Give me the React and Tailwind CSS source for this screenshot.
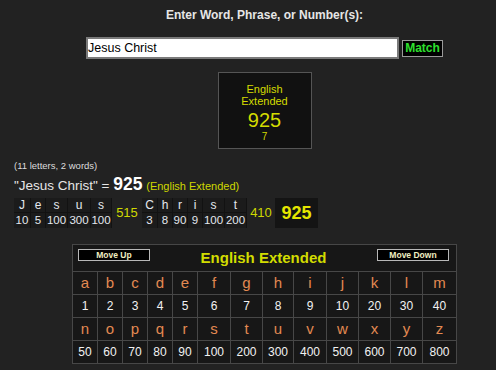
const topLetters = ['a', 'b', 'c', 'd', 'e', 'f', 'g', 'h', 'i', 'j', 'k', 'l', 'm'];
const topValues = [1, 2, 3, 4, 5, 6, 7, 8, 9, 10, 20, 30, 40];
const bottomLetters = ['n', 'o', 'p', 'q', 'r', 's', 't', 'u', 'v', 'w', 'x', 'y', 'z'];
const bottomValues = [50, 60, 70, 80, 90, 100, 200, 300, 400, 500, 600, 700, 800];

const words = [
  {
    sum: 515,
    sumWidth: 'w-[30px]',
    chars: [
      { ch: 'J', val: 10, w: 'w-[17px]' },
      { ch: 'e', val: 5, w: 'w-[15px]' },
      { ch: 's', val: 100, w: 'w-[22px]' },
      { ch: 'u', val: 300, w: 'w-[23px]' },
      { ch: 's', val: 100, w: 'w-[21px]' },
    ],
  },
  {
    sum: 410,
    sumWidth: 'w-[28px]',
    chars: [
      { ch: 'C', val: 3, w: 'w-[16px]' },
      { ch: 'h', val: 8, w: 'w-[15px]' },
      { ch: 'r', val: 90, w: 'w-[15px]' },
      { ch: 'i', val: 9, w: 'w-[15px]' },
      { ch: 's', val: 100, w: 'w-[22px]' },
      { ch: 't', val: 200, w: 'w-[22px]' },
    ],
  },
];

function Breakdown() {
  return (
    <div className="flex h-[30px] self-start ml-[14px] mt-[4px]">
      {words.map((word, wi) => (
        <div key={wi} className="flex">
          {word.chars.map((c, i) => (
            <div key={i} className={`${c.w} flex flex-col border-r border-[#121212]`}>
              <div className="h-[15px] flex items-center justify-center bg-[#1b1b1b] border-b border-[#121212] text-[12px] text-[#e4e8ee]">
                {c.ch}
              </div>
              <div className="h-[15px] flex items-center justify-center bg-[#1b1b1b] text-[11.5px] text-[#e4e8ee]">
                {c.val}
              </div>
            </div>
          ))}
          <div className={`${word.sumWidth} flex items-center justify-center text-[13px] text-[#cfd800]`}>
            {word.sum}
          </div>
        </div>
      ))}
      <div className="w-[43px] flex items-center justify-center bg-[#141414] text-[18px] font-bold text-[#e6e600]">
        925
      </div>
    </div>
  );
}

function CipherTable() {
  const cols = 'grid grid-cols-[24px_24px_24px_24px_24px_32px_31px_30px_32px_31px_31px_31px_33px]';
  return (
    <div className={`${cols} gap-px bg-[#474747] border border-[#474747] mt-[16px]`}>
      <div className="col-span-full h-[26px] bg-[#171717] flex items-start justify-between pl-[5px] pr-[7px] pt-[4px]">
        <button className="w-[72px] h-[12px] bg-black border border-[#b8b8b8] text-[8.5px] font-bold leading-none text-[#f0eec0]">
          Move Up
        </button>
        <span className="text-[15px] font-bold leading-[18px] text-[#d2dc00]">English Extended</span>
        <button className="w-[72px] h-[12px] bg-black border border-[#b8b8b8] text-[8.5px] font-bold leading-none text-[#f0eec0]">
          Move Down
        </button>
      </div>
      {topLetters.map((l) => (
        <div key={l} className="h-[22px] bg-[#171717] flex items-center justify-center text-[15px] text-[#e38a52]">
          {l}
        </div>
      ))}
      {topValues.map((v) => (
        <div key={v} className="h-[22px] bg-[#171717] flex items-center justify-center text-[12px] text-[#f2f2f2]">
          {v}
        </div>
      ))}
      {bottomLetters.map((l) => (
        <div key={l} className="h-[22px] bg-[#171717] flex items-center justify-center text-[15px] text-[#e38a52]">
          {l}
        </div>
      ))}
      {bottomValues.map((v) => (
        <div key={v} className="h-[22px] bg-[#171717] flex items-center justify-center text-[12px] text-[#f2f2f2]">
          {v}
        </div>
      ))}
    </div>
  );
}

export default function App() {
  return (
    <div className="w-full h-[370px] overflow-hidden bg-[#222222] font-['Liberation_Sans',Arial,sans-serif]">
      <div className="w-[529px] flex flex-col items-center pt-[7px]">
        <div className="text-[12px] leading-[16px] font-bold text-[#e6e6e6]">
          Enter Word, Phrase, or Number(s):
        </div>

        <div className="flex items-center gap-[3px] mt-[14px]">
          <div className="w-[313px] h-[22px] bg-white border-2 border-[#7a7a7a] flex items-center text-[12.5px] text-black">
            Jesus Christ
          </div>
          <button className="w-[41px] h-[17px] bg-black border border-[#9a9a9a] flex items-center justify-center text-[12px] font-bold text-[#2ee02e]">
            Match
          </button>
        </div>

        <div className="w-[94px] h-[77px] mt-[13px] bg-[#111111] border border-[#555555] flex flex-col items-center pt-[10px] text-[#d4dc00]">
          <div className="text-[11px] leading-[12px]">English</div>
          <div className="text-[11px] leading-[12px]">Extended</div>
          <div className="text-[20px] leading-[22px] mt-[2px]">925</div>
          <div className="text-[10px] leading-[12px]">7</div>
        </div>

        <div className="self-start ml-[14px] mt-[11px] text-[9.5px] leading-[12px] text-[#dcdcdc]">
          (11 letters, 2 words)
        </div>

        <div className="self-start ml-[14px] mt-[4px] h-[18px] leading-[18px] text-[13.5px] text-[#e6e6e6]">
          "Jesus Christ" = <span className="text-[17.5px] leading-none font-bold text-white">925</span>{' '}
          <span className="text-[11px] leading-none text-[#cfd800]">(English Extended)</span>
        </div>

        <Breakdown />
        <CipherTable />
      </div>
    </div>
  );
}
